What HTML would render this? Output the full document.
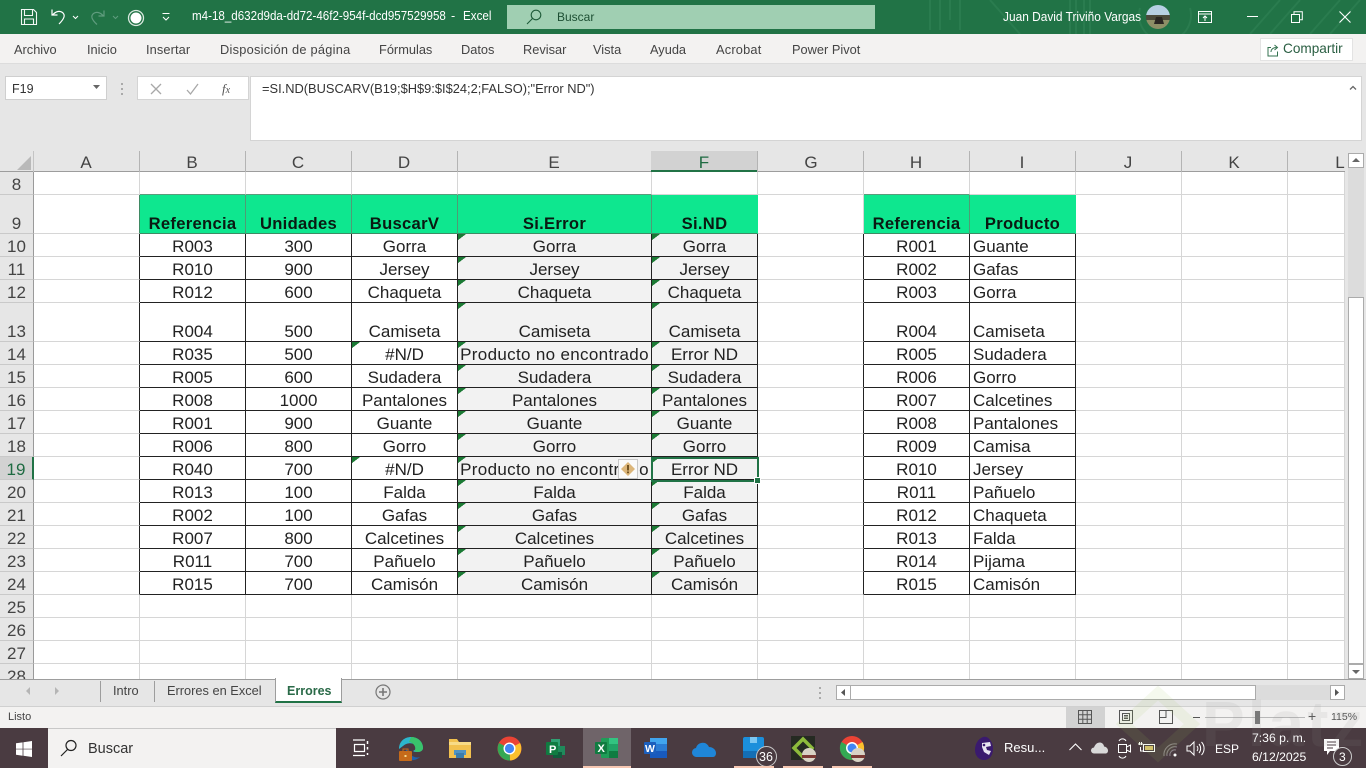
<!DOCTYPE html>
<html lang="es"><head><meta charset="utf-8"><title>Excel</title>
<style>
html,body{margin:0;padding:0;width:1366px;height:768px;overflow:hidden;background:#fff;font-family:"Liberation Sans",sans-serif}
.a{position:absolute}
.t{position:absolute;white-space:nowrap;line-height:1}
svg{position:absolute;overflow:visible}
#grid{position:absolute;left:0;top:172px;border-collapse:separate;border-spacing:0;table-layout:fixed;width:1345px;font-size:17px;color:#222}
#grid td{box-sizing:border-box;border-right:1px solid #d6d6d6;border-bottom:1px solid #d6d6d6;padding:0;text-align:center;vertical-align:bottom;line-height:19px;white-space:nowrap;overflow:hidden}
#grid td.h{background:#e6e6e6;color:#444;font-size:17px;border-right:1px solid #9a9a9a;border-bottom:1px solid #c9c9c9}
#grid td.r{border-right:1px solid #222}
#grid td.b{border-right:1px solid #222;border-bottom:1px solid #222}
#grid td.l{text-align:left;padding-left:3px}
#grid td.g{background:#0ee78f;font-weight:bold;color:#0a1a12;border-right:1px solid #4f9c74;border-bottom:1px solid #3f8a64;font-size:16.6px;letter-spacing:.3px}
#grid td.g2{background:#0ee78f;font-weight:bold;color:#0a1a12;border-right:1px solid #0ee78f;border-bottom:1px solid #3f8a64;font-size:16.6px;letter-spacing:.3px}
#grid td.up{border-bottom:1px solid #5a9c7c}
#grid td.gl{border-right:1px solid #3f8a64}
#grid td.f{background:#f2f2f2}
#grid td.w{letter-spacing:.33px}
#grid td.k{background:linear-gradient(to bottom right,#1b7a34 50%,transparent 51%) 0 0/8px 6px no-repeat}
#grid td.k.f{background:linear-gradient(to bottom right,#1b7a34 50%,transparent 51%) 0 0/8px 6px no-repeat,#f2f2f2}
.rib{font-size:12.8px;color:#444;top:44px}
.col{font-size:17px;color:#444;top:154px;width:106px;text-align:center}
.tb{background:#fff}
</style></head><body>

<!-- title bar -->
<div class="a" style="left:0;top:0;width:1366px;height:34px;background:#217346;overflow:hidden">
  <svg style="left:900px;top:0" width="466" height="34" fill="none" stroke="#2a7c4f" stroke-width="2"><path d="M30 0v30M40 0v30M50 0v20M60 0v30M90 0l30 34M170 0v34M176 0v34M184 0v34M190 0v34M240 8a26 26 0 1 0 50 0M380 0l-30 34M400 0l-30 34M440 0l-30 34M460 0l-30 34"/></svg>
</div>
<svg style="left:20px;top:8px" width="18" height="18" fill="none" stroke="#fff" stroke-width="1.1" opacity=".95"><path d="M1.5 1.5h12l3 3v12h-15zM4.500 1.500v6h8v-6M4.500 16.500v-5.500h9v5.500"/></svg>
<svg style="left:50px;top:8px" width="20" height="18" fill="none" stroke="#fff" stroke-width="1.2"><path d="M2 1.500v5.500h5.500M2.500 7C6 3 10 2.500 12.500 4.500c3 2.500 2 6-3.500 11.500"/></svg>
<svg style="left:72px;top:15px" width="7" height="5" fill="none" stroke="#fff"><path d="M1 1l2.500 2.500L6 1"/></svg>
<svg style="left:89px;top:9px" width="20" height="17" fill="none" stroke="#5f9c7e" stroke-width="1.2"><path d="M15 1.500v5.500h-5.500M14.500 7C11 3 7 2.500 4.500 4.500c-3 2.500-2 6 3.500 11"/></svg>
<svg style="left:112px;top:15px" width="7" height="5" fill="none" stroke="#5f9c7e"><path d="M1 1l2.500 2.500L6 1"/></svg>
<svg style="left:127px;top:9px" width="18" height="18"><circle cx="9" cy="9" r="7.500" fill="none" stroke="#d9e8df" stroke-width="1.3"/><circle cx="9" cy="9" r="5.500" fill="#fff"/></svg>
<svg style="left:161px;top:12px" width="10" height="10" fill="none" stroke="#fff"><path d="M1.500 1.500h7M2 5l3 3 3-3"/></svg>
<div class="t" style="left:192px;top:10px;font-size:12.5px;color:#fff;transform:scaleX(.927);transform-origin:0 0">m4-18_d632d9da-dd72-46f2-954f-dcd957529958</div>
<div class="t" style="left:451px;top:10px;font-size:12.5px;color:#fff">-</div>
<div class="t" style="left:463px;top:10px;font-size:12.5px;color:#fff;transform:scaleX(.93);transform-origin:0 0">Excel</div>
<div class="a" style="left:507px;top:5px;width:368px;height:24px;background:#a0cfb2"></div>
<svg style="left:526px;top:9px" width="16" height="16" fill="none" stroke="#1e5a38" stroke-width="1.100"><circle cx="10" cy="6" r="4.800"/><path d="M6.500 9.500L1 15"/></svg>
<div class="t" style="left:557px;top:11px;font-size:12px;color:#1d4f33">Buscar</div>
<div class="t" style="left:1003px;top:11px;font-size:12.6px;color:#fff;transform:scaleX(.945);transform-origin:0 0">Juan David Triviño Vargas</div>
<svg style="left:1146px;top:5px" width="25" height="25"><defs><clipPath id="c"><circle cx="12" cy="12" r="12"/></clipPath></defs><g clip-path="url(#c)"><rect width="25" height="10" fill="#b7d0e4"/><rect y="10" width="25" height="6" fill="#4b4a3c"/><rect y="15" width="25" height="10" fill="#8d8f66"/><path d="M8 19l2-7h6l2 7z" fill="#2a2622"/></g></svg>
<svg style="left:1198px;top:10px" width="14" height="14" fill="none" stroke="#fff"><path d="M.5 1.500h13v11H.500zM.5 4h13M7 11V6M5 8l2-2 2 2"/></svg>
<div class="a" style="left:1247px;top:16px;width:11px;height:1px;background:#fff"></div>
<svg style="left:1291px;top:11px" width="12" height="12" fill="none" stroke="#fff"><path d="M.5 3.500h8v8h-8zM3 3.500V.8h8.300v8H8.500"/></svg>
<svg style="left:1339px;top:11px" width="12" height="12" fill="none" stroke="#fff" stroke-width="1.100"><path d="M.5.500l11 11M11.500.500l-11 11"/></svg>

<!-- ribbon tabs -->
<div class="a" style="left:0;top:34px;width:1366px;height:30px;background:#f3f2f1;border-bottom:1px solid #dcdcdc;box-sizing:border-box"></div>
<div class="t rib" style="left:14px">Archivo</div>
<div class="t rib" style="left:87px">Inicio</div>
<div class="t rib" style="left:146px;letter-spacing:.1px">Insertar</div>
<div class="t rib" style="left:220px;letter-spacing:.25px">Disposición de página</div>
<div class="t rib" style="left:379px">Fórmulas</div>
<div class="t rib" style="left:461px">Datos</div>
<div class="t rib" style="left:523px">Revisar</div>
<div class="t rib" style="left:593px">Vista</div>
<div class="t rib" style="left:650px">Ayuda</div>
<div class="t rib" style="left:716px;letter-spacing:.2px">Acrobat</div>
<div class="t rib" style="left:792px">Power Pivot</div>
<div class="a" style="left:1260px;top:38px;width:93px;height:23px;background:#fff;border:1px solid #e3e3e3;box-sizing:border-box"></div>
<svg style="left:1267px;top:43px" width="13" height="14" fill="none" stroke="#33724f"><path d="M10.500 8.500v4.500h-9.500V4.500h3M4 9c0-3 2.500-4.500 5.500-4.500M7.500 2l3 2.500-3 2.500"/></svg>
<div class="t" style="left:1283px;top:42px;font-size:13.6px;color:#2b5f43">Compartir</div>

<!-- formula bar -->
<div class="a" style="left:0;top:64px;width:1366px;height:87px;background:#e6e6e6"></div>
<div class="a tb" style="left:5px;top:76px;width:102px;height:24px;border:1px solid #cfcfcf;box-sizing:border-box"></div>
<div class="t" style="left:12px;top:83px;font-size:12.5px;color:#333">F19</div>
<svg style="left:93px;top:85px" width="8" height="5"><path d="M0 0h7L3.500 4z" fill="#666"/></svg>
<svg style="left:121px;top:83px" width="3" height="13" fill="#aaa"><rect width="2" height="2"/><rect y="5" width="2" height="2"/><rect y="10" width="2" height="2"/></svg>
<div class="a tb" style="left:137px;top:76px;width:112px;height:24px;border:1px solid #d4d4d4;box-sizing:border-box"></div>
<svg style="left:150px;top:83px" width="12" height="12" fill="none" stroke="#a8a8a8" stroke-width="1.300"><path d="M1 1l10 10M11 1L1 11"/></svg>
<svg style="left:186px;top:83px" width="13" height="12" fill="none" stroke="#a8a8a8" stroke-width="1.300"><path d="M1 7l3.500 4L12 1"/></svg>
<div class="t" style="left:222px;top:81px;font:italic 13px 'Liberation Serif',serif;color:#555">f<span style="font-size:10px">x</span></div>
<div class="a tb" style="left:250px;top:76px;width:1112px;height:65px;border:1px solid #d4d4d4;box-sizing:border-box"></div>
<div class="t" style="left:262px;top:83px;font-size:12.85px;color:#333">=SI.ND(BUSCARV(B19;$H$9:$I$24;2;FALSO);"Error ND")</div>
<svg style="left:1349px;top:85px" width="8" height="6" fill="none" stroke="#666" stroke-width="1.300"><path d="M1 4.500l3-3 3 3"/></svg>

<!-- column headers -->
<div class="a" style="left:0;top:151px;width:1366px;height:21px;background:#e6e6e6;border-bottom:1px solid #9d9d9d;box-sizing:border-box"></div>
<svg style="left:17px;top:156px" width="15" height="15"><path d="M14 0v14H0z" fill="#b9b9b9"/></svg>
<div class="a" style="left:651px;top:151px;width:106px;height:21px;background:#d2d2d2;border-bottom:2px solid #217346;box-sizing:border-box"></div>
<div class="a" style="left:33px;top:151px;width:1px;height:21px;background:#c4c4c4"></div>
<div class="a" style="left:139px;top:151px;width:1px;height:21px;background:#b4b4b4"></div>
<div class="a" style="left:245px;top:151px;width:1px;height:21px;background:#b4b4b4"></div>
<div class="a" style="left:351px;top:151px;width:1px;height:21px;background:#b4b4b4"></div>
<div class="a" style="left:457px;top:151px;width:1px;height:21px;background:#b4b4b4"></div>
<div class="a" style="left:863px;top:151px;width:1px;height:21px;background:#b4b4b4"></div>
<div class="a" style="left:757px;top:151px;width:1px;height:21px;background:#b4b4b4"></div>
<div class="a" style="left:969px;top:151px;width:1px;height:21px;background:#b4b4b4"></div>
<div class="a" style="left:1075px;top:151px;width:1px;height:21px;background:#b4b4b4"></div>
<div class="a" style="left:1181px;top:151px;width:1px;height:21px;background:#b4b4b4"></div>
<div class="a" style="left:1287px;top:151px;width:1px;height:21px;background:#b4b4b4"></div>
<div class="t col" style="left:33px">A</div>
<div class="t col" style="left:139px">B</div>
<div class="t col" style="left:245px">C</div>
<div class="t col" style="left:351px">D</div>
<div class="t col" style="left:501px">E</div>
<div class="t col" style="left:651px;color:#1f6b42">F</div>
<div class="t col" style="left:758px">G</div>
<div class="t col" style="left:863px">H</div>
<div class="t col" style="left:969px">I</div>
<div class="t col" style="left:1075px">J</div>
<div class="t col" style="left:1181px">K</div>
<div class="t col" style="left:1287px">L</div>

<!-- grid -->
<table id="grid">
<colgroup><col style="width:34px"><col style="width:106px"><col style="width:106px"><col style="width:106px"><col style="width:106px"><col style="width:194px"><col style="width:106px"><col style="width:106px"><col style="width:106px"><col style="width:106px"><col style="width:106px"><col style="width:106px"><col style="width:57px"></colgroup>
<tr style="height:23px"><td class="h">8</td><td></td><td class="up"></td><td class="up"></td><td class="up"></td><td class="up"></td><td></td><td></td><td class="up"></td><td></td><td></td><td></td><td></td></tr>
<tr style="height:39px"><td class="h">9</td><td class="gl"></td><td class="g">Referencia</td><td class="g">Unidades</td><td class="g">BuscarV</td><td class="g">Si.Error</td><td class="g2">Si.ND</td><td></td><td class="g">Referencia</td><td class="g2">Producto</td><td></td><td></td><td></td></tr>
<tr style="height:23px"><td class="h">10</td><td class="r"></td><td class="b">R003</td><td class="b">300</td><td class="b">Gorra</td><td class="b f k">Gorra</td><td class="b f k">Gorra</td><td class="r"></td><td class="b">R001</td><td class="b l">Guante</td><td></td><td></td><td></td></tr>
<tr style="height:23px"><td class="h">11</td><td class="r"></td><td class="b">R010</td><td class="b">900</td><td class="b">Jersey</td><td class="b f k">Jersey</td><td class="b f k">Jersey</td><td class="r"></td><td class="b">R002</td><td class="b l">Gafas</td><td></td><td></td><td></td></tr>
<tr style="height:23px"><td class="h">12</td><td class="r"></td><td class="b">R012</td><td class="b">600</td><td class="b">Chaqueta</td><td class="b f k">Chaqueta</td><td class="b f k">Chaqueta</td><td class="r"></td><td class="b">R003</td><td class="b l">Gorra</td><td></td><td></td><td></td></tr>
<tr style="height:39px"><td class="h">13</td><td class="r"></td><td class="b">R004</td><td class="b">500</td><td class="b">Camiseta</td><td class="b f k">Camiseta</td><td class="b f k">Camiseta</td><td class="r"></td><td class="b">R004</td><td class="b l">Camiseta</td><td></td><td></td><td></td></tr>
<tr style="height:23px"><td class="h">14</td><td class="r"></td><td class="b">R035</td><td class="b">500</td><td class="b k">#N/D</td><td class="b f k w">Producto no encontrado</td><td class="b f k">Error ND</td><td class="r"></td><td class="b">R005</td><td class="b l">Sudadera</td><td></td><td></td><td></td></tr>
<tr style="height:23px"><td class="h">15</td><td class="r"></td><td class="b">R005</td><td class="b">600</td><td class="b">Sudadera</td><td class="b f k">Sudadera</td><td class="b f k">Sudadera</td><td class="r"></td><td class="b">R006</td><td class="b l">Gorro</td><td></td><td></td><td></td></tr>
<tr style="height:23px"><td class="h">16</td><td class="r"></td><td class="b">R008</td><td class="b">1000</td><td class="b">Pantalones</td><td class="b f k">Pantalones</td><td class="b f k">Pantalones</td><td class="r"></td><td class="b">R007</td><td class="b l">Calcetines</td><td></td><td></td><td></td></tr>
<tr style="height:23px"><td class="h">17</td><td class="r"></td><td class="b">R001</td><td class="b">900</td><td class="b">Guante</td><td class="b f k">Guante</td><td class="b f k">Guante</td><td class="r"></td><td class="b">R008</td><td class="b l">Pantalones</td><td></td><td></td><td></td></tr>
<tr style="height:23px"><td class="h">18</td><td class="r"></td><td class="b">R006</td><td class="b">800</td><td class="b">Gorro</td><td class="b f k">Gorro</td><td class="b f k">Gorro</td><td class="r"></td><td class="b">R009</td><td class="b l">Camisa</td><td></td><td></td><td></td></tr>
<tr style="height:23px"><td class="h" style="background:#d2d2d2;color:#1f6b42;border-right:2px solid #217346">19</td><td class="r"></td><td class="b">R040</td><td class="b">700</td><td class="b k">#N/D</td><td class="b f k w">Producto no encontrado</td><td class="b f k">Error ND</td><td class="r"></td><td class="b">R010</td><td class="b l">Jersey</td><td></td><td></td><td></td></tr>
<tr style="height:23px"><td class="h">20</td><td class="r"></td><td class="b">R013</td><td class="b">100</td><td class="b">Falda</td><td class="b f k">Falda</td><td class="b f k">Falda</td><td class="r"></td><td class="b">R011</td><td class="b l">Pañuelo</td><td></td><td></td><td></td></tr>
<tr style="height:23px"><td class="h">21</td><td class="r"></td><td class="b">R002</td><td class="b">100</td><td class="b">Gafas</td><td class="b f k">Gafas</td><td class="b f k">Gafas</td><td class="r"></td><td class="b">R012</td><td class="b l">Chaqueta</td><td></td><td></td><td></td></tr>
<tr style="height:23px"><td class="h">22</td><td class="r"></td><td class="b">R007</td><td class="b">800</td><td class="b">Calcetines</td><td class="b f k">Calcetines</td><td class="b f k">Calcetines</td><td class="r"></td><td class="b">R013</td><td class="b l">Falda</td><td></td><td></td><td></td></tr>
<tr style="height:23px"><td class="h">23</td><td class="r"></td><td class="b">R011</td><td class="b">700</td><td class="b">Pañuelo</td><td class="b f k">Pañuelo</td><td class="b f k">Pañuelo</td><td class="r"></td><td class="b">R014</td><td class="b l">Pijama</td><td></td><td></td><td></td></tr>
<tr style="height:23px"><td class="h">24</td><td class="r"></td><td class="b">R015</td><td class="b">700</td><td class="b">Camisón</td><td class="b f k">Camisón</td><td class="b f k">Camisón</td><td class="r"></td><td class="b">R015</td><td class="b l">Camisón</td><td></td><td></td><td></td></tr>
<tr style="height:23px"><td class="h">25</td><td></td><td></td><td></td><td></td><td></td><td></td><td></td><td></td><td></td><td></td><td></td><td></td></tr>
<tr style="height:23px"><td class="h">26</td><td></td><td></td><td></td><td></td><td></td><td></td><td></td><td></td><td></td><td></td><td></td><td></td></tr>
<tr style="height:23px"><td class="h">27</td><td></td><td></td><td></td><td></td><td></td><td></td><td></td><td></td><td></td><td></td><td></td><td></td></tr>
<tr style="height:23px"><td class="h">28</td><td></td><td></td><td></td><td></td><td></td><td></td><td></td><td></td><td></td><td></td><td></td><td></td></tr>
</table>

<!-- active cell and error tag -->
<div class="a" style="left:651px;top:457px;width:108px;height:25px;border:2px solid #217346;box-sizing:border-box"></div>
<div class="a" style="left:754px;top:477px;width:7px;height:7px;background:#217346;border:1px solid #fff;box-sizing:border-box"></div>
<div class="a" style="left:618px;top:459px;width:20px;height:20px;background:#fafafa;border:1px solid #c8c8c8;box-sizing:border-box"></div>
<svg style="left:620px;top:461px" width="16" height="16"><path d="M8 1l7 7-7 7-7-7z" fill="#dcb67a"/><rect x="7.200" y="4" width="1.600" height="5.500" fill="#5b3d0c"/><rect x="7.200" y="10.500" width="1.600" height="1.700" fill="#5b3d0c"/></svg>

<!-- vertical scrollbar -->
<div class="a" style="left:1345px;top:151px;width:21px;height:528px;background:#e6e6e6"></div>
<div class="a" style="left:1348px;top:168px;width:16px;height:129px;background:#dcdcdc"></div>
<div class="a" style="left:1348px;top:153px;width:16px;height:15px;background:#fff;border:1px solid #ababab;box-sizing:border-box"></div>
<svg style="left:1352px;top:158px" width="9" height="5"><path d="M4 0l4 4H0z" fill="#666"/></svg>
<div class="a" style="left:1348px;top:297px;width:16px;height:367px;background:#fff;border:1px solid #ababab;box-sizing:border-box"></div>
<div class="a" style="left:1348px;top:664px;width:16px;height:15px;background:#fff;border:1px solid #ababab;box-sizing:border-box"></div>
<svg style="left:1352px;top:670px" width="9" height="5"><path d="M0 0h8L4 4z" fill="#666"/></svg>

<!-- sheet tabs -->
<div class="a" style="left:0;top:679px;width:1366px;height:27px;background:#e6e6e6;border-top:1px solid #9d9d9d;box-sizing:border-box"></div>
<svg style="left:26px;top:687px" width="5" height="9"><path d="M4 0v8L0 4z" fill="#b5b5b5"/></svg>
<svg style="left:55px;top:687px" width="5" height="9"><path d="M0 0v8l4-4z" fill="#b5b5b5"/></svg>
<div class="a" style="left:100px;top:681px;width:1px;height:21px;background:#9d9d9d"></div>
<div class="t" style="left:113px;top:685px;font-size:12.8px;color:#444">Intro</div>
<div class="a" style="left:154px;top:681px;width:1px;height:21px;background:#9d9d9d"></div>
<div class="t" style="left:167px;top:685px;font-size:12.8px;color:#444">Errores en Excel</div>
<div class="a" style="left:275px;top:678px;width:67px;height:25px;background:#fff;border:1px solid #9d9d9d;border-top:0;border-bottom:2px solid #217346;box-sizing:border-box"></div>
<div class="t" style="left:287px;top:685px;font-size:12.5px;font-weight:bold;color:#2a6a48">Errores</div>
<svg style="left:375px;top:684px" width="16" height="16" fill="none" stroke="#777" stroke-width="1.200"><circle cx="8" cy="8" r="7"/><path d="M8 4v8M4 8h8" stroke-width="1.600"/></svg>
<svg style="left:819px;top:687px" width="3" height="12" fill="#aaa"><rect width="2" height="2"/><rect y="5" width="2" height="2"/><rect y="10" width="2" height="2"/></svg>
<div class="a" style="left:836px;top:685px;width:15px;height:15px;background:#fff;border:1px solid #ababab;box-sizing:border-box"></div>
<svg style="left:841px;top:689px" width="5" height="8"><path d="M4 0v7L0 3.500z" fill="#555"/></svg>
<div class="a" style="left:850px;top:685px;width:406px;height:15px;background:#fff;border:1px solid #ababab;box-sizing:border-box"></div>
<div class="a" style="left:1256px;top:685px;width:74px;height:15px;background:#dcdcdc"></div>
<div class="a" style="left:1330px;top:685px;width:15px;height:15px;background:#fff;border:1px solid #ababab;box-sizing:border-box"></div>
<svg style="left:1335px;top:689px" width="5" height="8"><path d="M0 0v7l4-3.500z" fill="#555"/></svg>

<!-- status bar -->
<div class="a" style="left:0;top:706px;width:1366px;height:22px;background:#f3f2f1;border-top:1px solid #d0d0d0;box-sizing:border-box"></div>
<div class="t" style="left:8px;top:712px;font-size:11px;color:#444">Listo</div>
<div class="a" style="left:1066px;top:707px;width:39px;height:21px;background:#d2d2d2"></div>
<svg style="left:1078px;top:710px" width="15" height="15" fill="none" stroke="#555"><path d="M.5.500h13v13H.500zM.5 4.800h13M.5 9.200h13M4.800.500v13M9.200.500v13"/></svg>
<svg style="left:1119px;top:710px" width="15" height="15" fill="none" stroke="#555"><path d="M.5.500h13v13H.500zM3.500 3.500h7v7h-7zM5 5.500h4M5 7h4M5 8.500h4"/></svg>
<svg style="left:1159px;top:710px" width="15" height="15" fill="none" stroke="#555"><path d="M.5.500h13v13H.500zM7 .5v7H.5"/></svg>
<div class="a" style="left:1193px;top:717px;width:7px;height:1px;background:#555"></div>
<div class="a" style="left:1205px;top:717px;width:100px;height:1px;background:#b8b8b8"></div>
<div class="a" style="left:1255px;top:711px;width:5px;height:13px;background:#777"></div>
<div class="t" style="left:1308px;top:709px;font-size:14px;color:#555">+</div>
<div class="t" style="left:1331px;top:712px;font-size:10.5px;color:#555">115%</div>

<!-- taskbar -->
<div class="a" style="left:0;top:728px;width:1366px;height:40px;background:#4a3b41"></div>
<svg style="left:16px;top:741px" width="16" height="16" fill="#fff"><path d="M0 2.300l6.600-.9v6.300H0zM7.400 1.300L16 0v7.700H7.400zM0 8.400h6.600v6.300L0 13.800zM7.400 8.400H16V16l-8.600-1.200z"/></svg>
<div class="a" style="left:48px;top:728px;width:288px;height:40px;background:#f3f2f1;border-top:1px solid #c8c8c8;box-sizing:border-box"></div>
<svg style="left:60px;top:739px" width="17" height="18" fill="none" stroke="#222" stroke-width="1.200"><circle cx="11" cy="6.500" r="5"/><path d="M7.500 10.500L1 17"/></svg>
<div class="t" style="left:88px;top:742px;font-size:14.5px;color:#333">Buscar</div>
<svg style="left:352px;top:739px" width="17" height="18" fill="none" stroke="#fff"><path d="M1 1h12M2.500 5.500h10v7h-10zM1 16.500h12" stroke-width="1.200"/><path d="M15.500 2v3M15.500 8v2.500M15.500 14v2" stroke-width="1.500"/></svg>

<svg style="left:398px;top:736px" width="26" height="26"><path d="M1 13C1 5 7 1 13 1c7 0 12 5 12 11 0 2-2 4-5 4-2 0-4 0-5-1 3-1 4-4 2-6-3-3-9-2-12 1z" fill="#2cb6cc"/><path d="M13 1c7 0 12 5 12 11 0 2-2 4-5 4-2 0-4-1-3-2 1-3-1-7-6-8z" fill="#39c46b"/><path d="M8 12c2 6 8 11 14 9-4 4-11 4-14 1z" fill="#1f62ad"/><rect x="1" y="15" width="13" height="10" rx="1" fill="#c56a1a"/><rect x="5" y="13" width="5" height="3" fill="none" stroke="#c56a1a"/><rect x="6.500" y="19" width="2" height="2" fill="#f6d88a"/></svg>
<svg style="left:449px;top:738px" width="22" height="21"><path d="M0 1h8l2 3h12v16H0z" fill="#f2c14e"/><path d="M0 4h22v3H0z" fill="#f8db86"/><rect x="5" y="12" width="12" height="5" fill="#4f93c3"/><rect x="7" y="15" width="8" height="5" fill="#3b7cab"/></svg>
<svg style="left:497px;top:736px" width="25" height="25"><circle cx="12.500" cy="12.500" r="12" fill="#ea4335"/><path d="M12.500 12.500L23 7a12 12 0 0 1-10 17.500z" fill="#fbc02d"/><path d="M12.500 12.500L13 24.500A12 12 0 0 1 2 7z" fill="#34a853"/><circle cx="12.500" cy="12.500" r="6" fill="#fff"/><circle cx="12.500" cy="12.500" r="4.600" fill="#4285f4"/></svg>
<svg style="left:546px;top:738px" width="22" height="22"><rect x="5" y="1" width="9" height="9" fill="#2fa173"/><rect x="10" y="8" width="9" height="9" fill="#1f8a5b"/><rect x="7" y="14" width="9" height="6" fill="#0f5c3c"/><rect y="4" width="12" height="13" rx="1" fill="#107c41"/><text x="3" y="15" font-size="11" font-weight="bold" fill="#fff" font-family="Liberation Sans,sans-serif">P</text></svg>

<div class="a" style="left:583px;top:728px;width:48px;height:40px;background:#6f6469"></div>
<div class="a" style="left:583px;top:766px;width:48px;height:2px;background:#f6c7b2"></div>
<svg style="left:595px;top:737px" width="24" height="22"><rect x="6" y="1" width="17" height="20" rx="1" fill="#1f9d58"/><rect x="14" y="1" width="9" height="6" fill="#33c481"/><rect x="14" y="7" width="9" height="7" fill="#21a366"/><rect x="14" y="14" width="9" height="7" fill="#107c41"/><rect y="5" width="12" height="12" rx="1" fill="#107c41"/><text x="2.500" y="15" font-size="11" font-weight="bold" fill="#fff" font-family="Liberation Sans,sans-serif">X</text></svg>
<svg style="left:644px;top:737px" width="24" height="22"><rect x="6" y="1" width="17" height="20" rx="1" fill="#2b7cd3"/><rect x="6" y="1" width="17" height="6" fill="#41a5ee"/><rect x="6" y="14" width="17" height="7" fill="#185abd"/><rect y="5" width="12" height="12" rx="1" fill="#1c5fbd"/><text x="1" y="15" font-size="10.500" font-weight="bold" fill="#fff" font-family="Liberation Sans,sans-serif">W</text></svg>
<svg style="left:692px;top:741px" width="26" height="17"><path d="M5 16a4.500 4.500 0 0 1-1-9c1-4 5-6 9-5 2 1 3 2 4 4 4 0 7 3 7 6 0 2-1 4-3 4z" fill="#1f86d8"/></svg>
<svg style="left:743px;top:737px" width="22" height="22"><rect width="21" height="21" rx="2" fill="#1b8fdb"/><rect x="7" y="0" width="7" height="6" fill="#7cc7f2"/><rect y="14" width="21" height="7" fill="#146fb5"/></svg>
<div class="a" style="left:756px;top:746px;width:21px;height:21px;border:1px solid #c8c8c8;border-radius:50%;background:#4a3b41;box-sizing:border-box"></div>
<div class="t" style="left:759px;top:751px;font-size:12.5px;color:#fff">36</div>
<div class="a" style="left:734px;top:766px;width:40px;height:2px;background:#f6c7b2"></div>
<svg style="left:791px;top:736px" width="26" height="26"><rect width="24" height="24" fill="#252a22"/><path d="M12 3l9 9-9 9-9-9z" fill="none" stroke="#8dbb3c" stroke-width="3.500"/><circle cx="18" cy="19" r="7" fill="#d8d3c4"/><path d="M11 19h14v3H11z" fill="#7c3b34"/></svg>
<div class="a" style="left:783px;top:766px;width:40px;height:2px;background:#f6c7b2"></div>
<svg style="left:840px;top:736px" width="26" height="26"><circle cx="12" cy="12" r="12" fill="#ea4335"/><path d="M12 12L22.500 6a12 12 0 0 1-10 18z" fill="#fbc02d"/><path d="M12 12L12.500 24A12 12 0 0 1 1.500 6z" fill="#34a853"/><circle cx="12" cy="12" r="6" fill="#fff"/><circle cx="12" cy="12" r="4.500" fill="#4285f4"/><circle cx="18" cy="19" r="7" fill="#d8d3c4"/><path d="M11 19h14v3H11z" fill="#7c3b34"/></svg>
<div class="a" style="left:832px;top:766px;width:40px;height:2px;background:#f6c7b2"></div>

<svg style="left:974px;top:736px" width="20" height="25"><path d="M9 1c3-1 6 1 7 3 2 2 3 5 3 9 0 6-3 11-9 11-5 0-9-4-9-10C1 8 4 3 9 1z" fill="#3a1a6e"/><path d="M8 7l8-1 1 4-5 1 1 3 4 1-2 4-5-3-2-5z" fill="#e9e4f2"/><circle cx="10" cy="9" r="1.300" fill="#3a1a6e"/></svg>
<div class="t" style="left:1004px;top:741px;font-size:13px;color:#fff">Resu...</div>
<svg style="left:1069px;top:743px" width="13" height="8" fill="none" stroke="#fff" stroke-width="1.100"><path d="M.5 7L6.500 1l6 6"/></svg>
<svg style="left:1091px;top:742px" width="17" height="12"><path d="M3 11.500a3 3 0 0 1 0-6c1-3 3-5 6-5 2 0 4 2 4 4 2 0 4 2 4 4s-1 3-3 3z" fill="#d9d9d9"/></svg>
<svg style="left:1116px;top:739px" width="18" height="19" fill="none" stroke="#fff"><path d="M2.500 5.500h8v8h-8zM10.500 8l4-2v7l-4-2M3 2a4 4 0 0 1 7 0M3 17a4 4 0 0 0 7 0"/></svg>
<svg style="left:1137px;top:741px" width="19" height="14" fill="none" stroke="#fff"><rect x="6.500" y="3.500" width="11" height="7"/><rect x="8" y="5" width="8" height="4" fill="#d9c36f" stroke="none"/><path d="M1 3h5M2.500 1v3M4.500 1v3M3.500 6v4h3"/></svg>
<svg style="left:1163px;top:743px" width="15" height="14" fill="none" stroke="#8a8286" stroke-width="1.100"><path d="M1 13A11 11 0 0 1 14 1M4 13a8 8 0 0 1 10-9M7 13a5 5 0 0 1 6-6"/><circle cx="12" cy="12" r="1.500" fill="#fff" stroke="none"/></svg>
<svg style="left:1186px;top:741px" width="18" height="15" fill="none" stroke="#fff"><path d="M1 5h3l4-4v13l-4-4H1zM11 5a4 4 0 0 1 0 5M13 3a7 7 0 0 1 0 9M15.500 1a9.500 9.500 0 0 1 0 13"/></svg>
<div class="t" style="left:1215px;top:743px;font-size:12px;color:#fff">ESP</div>
<div class="t" style="left:1252px;top:732px;font-size:12.2px;color:#fff;width:68px">7:36 p. m.</div>
<div class="t" style="left:1252px;top:751px;font-size:12.2px;color:#fff;width:68px">6/12/2025</div>
<svg style="left:1324px;top:739px" width="17" height="17"><path d="M0 0h15v12H6l-3 4v-4H0z" fill="#fff"/><path d="M3 3h9M3 6h9M3 9h6" stroke="#4a3b41"/></svg>
<div class="a" style="left:1333px;top:747px;width:19px;height:19px;border:1px solid #ccc;border-radius:50%;background:#4a3b41;box-sizing:border-box"></div>
<div class="t" style="left:1339px;top:751px;font-size:12px;color:#fff">3</div>

<!-- watermark -->
<svg style="left:1118px;top:687px;pointer-events:none" width="80" height="74"><path d="M40 6l34 31-34 31L6 37z" fill="none" stroke="#9bc25a" stroke-width="11" opacity=".1"/></svg>
<div class="t" style="left:1202px;top:692px;font-size:64px;font-weight:bold;color:#8f8f8f;opacity:.11;letter-spacing:3px">Platzi</div>
</body></html>
